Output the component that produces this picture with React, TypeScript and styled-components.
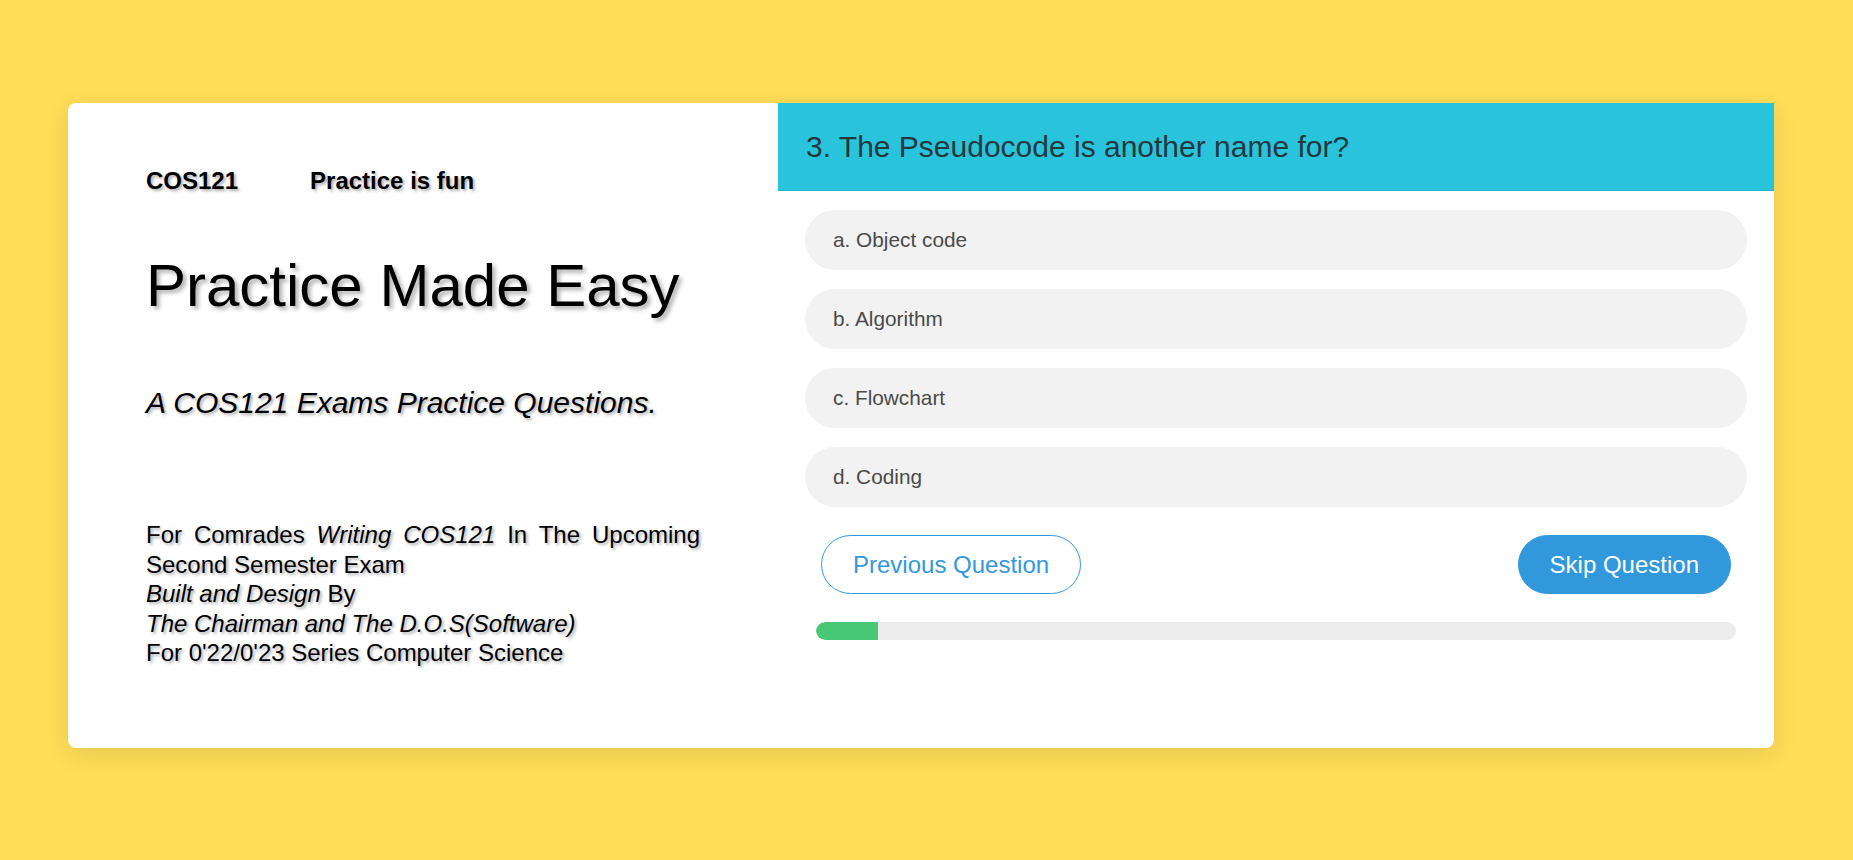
import React from "react";
import styled, { createGlobalStyle } from "styled-components";

const GlobalStyle = createGlobalStyle`
  * { box-sizing: border-box; }
  html, body {
    margin: 0;
    padding: 0;
    background: #ffdd57;
    font-family: "Liberation Sans", Arial, Helvetica, sans-serif;
  }
  body { min-height: 860px; }
`;

const Page = styled.div`
  padding: 103px 0 0 68px;
  min-height: 860px;
`;

const Card = styled.div`
  width: 1706px;
  display: flex;
  background: #ffffff;
  border-radius: 8px;
  box-shadow: 0 6px 24px rgba(0, 0, 0, 0.1);
`;

const LeftPanel = styled.section`
  width: 710px;
  flex: none;
  padding: 64px 78px 80px 78px;
  color: #000;
  text-shadow: 2px 2px 3px rgba(0, 0, 0, 0.32);
`;

const TopRow = styled.div`
  display: flex;
  gap: 72px;
  font-size: 24px;
  font-weight: 700;
  line-height: 27.6px;
`;

const Title = styled.h1`
  margin: 56.6px 0 0;
  font-size: 60px;
  font-weight: 400;
  line-height: 69px;
  text-shadow: 3px 3px 4px rgba(0, 0, 0, 0.32);
`;

const Subtitle = styled.h2`
  margin: 66px 0 0;
  font-size: 30px;
  font-weight: 400;
  font-style: italic;
  line-height: 34.5px;
`;

const Credits = styled.p`
  margin: 99.4px 0 0;
  font-size: 24px;
  line-height: 29.6px;
  text-align: justify;
`;

const RightPanel = styled.section`
  flex: 1;
  display: flex;
  flex-direction: column;
`;

const QuestionHeader = styled.header`
  height: 88px;
  display: flex;
  align-items: center;
  padding: 1px 28px 0;
  background: #29c4db;
  border-bottom: 1px solid #22b6cc;
  color: #22383e;
  font-size: 30px;
  line-height: 34.5px;
`;

const Options = styled.div`
  display: flex;
  flex-direction: column;
  gap: 19px;
  padding: 19px 27px 0;
`;

const Option = styled.div`
  height: 60px;
  display: flex;
  align-items: center;
  padding: 0 28px;
  background: #f2f2f2;
  border-radius: 30px;
  color: #4a4a4a;
  font-size: 20.8px;
`;

const ButtonRow = styled.div`
  display: flex;
  justify-content: space-between;
  padding: 28px 43px 0;
`;

const Button = styled.button<{ $solid?: boolean }>`
  height: 59px;
  padding: 0 31px;
  border-radius: 30px;
  border: 1px solid #3298dc;
  background: ${(p) => (p.$solid ? "#3298dc" : "#ffffff")};
  color: ${(p) => (p.$solid ? "#ffffff" : "#3298dc")};
  font-family: "Liberation Sans", Arial, sans-serif;
  font-size: 24px;
  cursor: pointer;
`;

const Progress = styled.div`
  margin: 28px 38px 0;
  height: 18px;
  border-radius: 9px;
  background: #ededed;
  overflow: hidden;
`;

const ProgressFill = styled.div`
  height: 100%;
  background: #48c774;
  border-radius: 9px 0 0 9px;
`;

const options = ["a. Object code", "b. Algorithm", "c. Flowchart", "d. Coding"];

export default function App() {
  const progress = 6.74;
  return (
    <>
      <GlobalStyle />
      <Page>
        <Card>
          <LeftPanel>
            <TopRow>
              <span>COS121</span>
              <span>Practice is fun</span>
            </TopRow>
            <Title>Practice Made Easy</Title>
            <Subtitle>A COS121 Exams Practice Questions.</Subtitle>
            <Credits>
              For Comrades <i>Writing COS121</i> In The Upcoming Second Semester Exam
              <br />
              <i>Built and Design</i> By
              <br />
              <i>The Chairman and The D.O.S(Software)</i>
              <br />
              For 0'22/0'23 Series Computer Science
            </Credits>
          </LeftPanel>
          <RightPanel>
            <QuestionHeader>3. The Pseudocode is another name for?</QuestionHeader>
            <Options>
              {options.map((o) => (
                <Option key={o}>{o}</Option>
              ))}
            </Options>
            <ButtonRow>
              <Button>Previous Question</Button>
              <Button $solid>Skip Question</Button>
            </ButtonRow>
            <Progress>
              <ProgressFill style={{ width: `${progress}%` }} />
            </Progress>
          </RightPanel>
        </Card>
      </Page>
    </>
  );
}
